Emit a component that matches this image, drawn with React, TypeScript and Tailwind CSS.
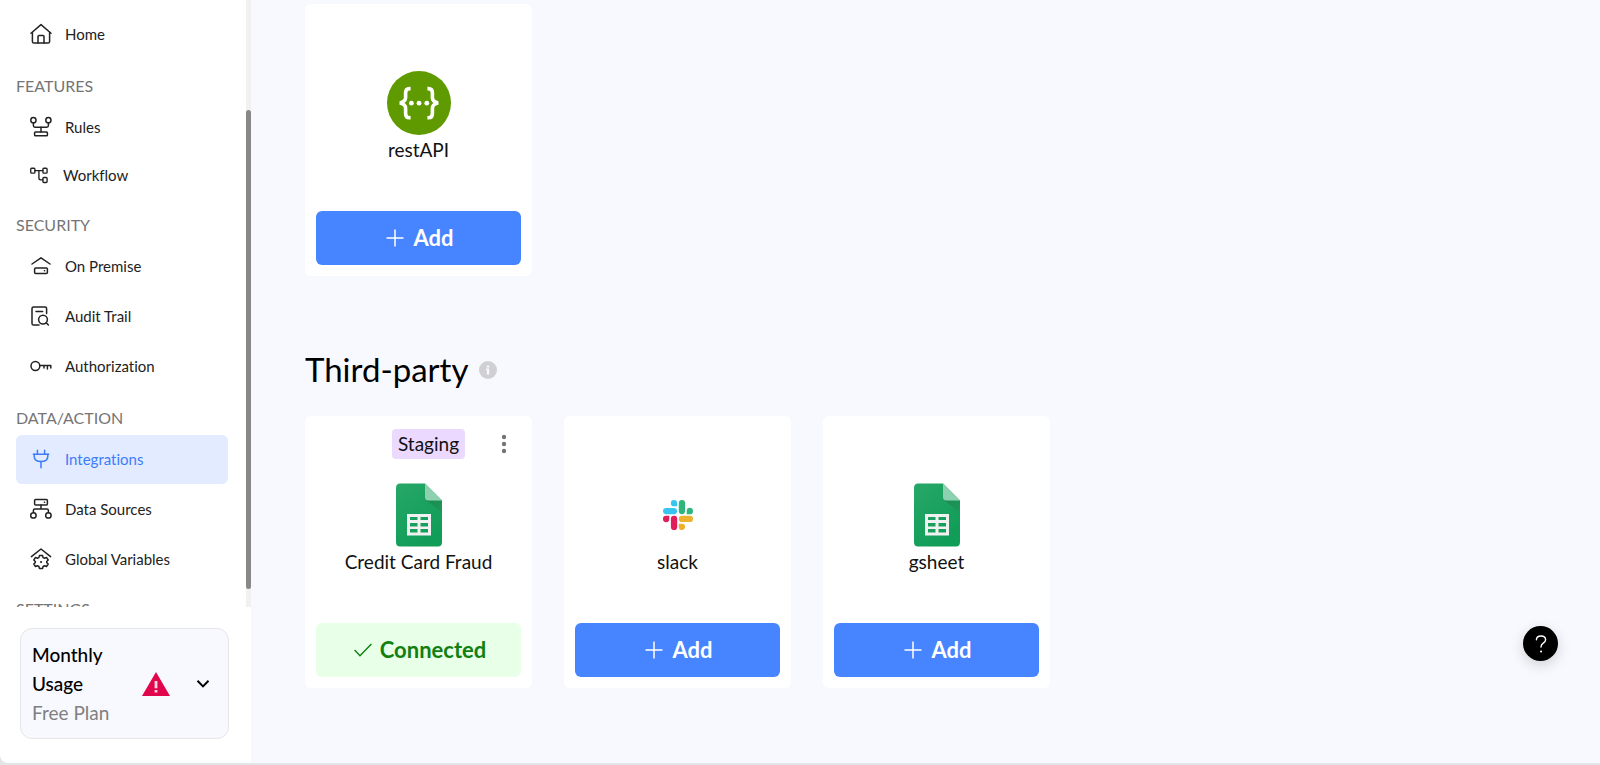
import React from 'react';
import { clsx } from 'clsx';

type IconProps = { className?: string };

function StrokeIcon({ children, className }: { children: React.ReactNode; className?: string }) {
  return (
    <svg
      viewBox="0 0 22 22"
      fill="none"
      stroke="currentColor"
      strokeWidth="1.5"
      strokeLinecap="round"
      strokeLinejoin="round"
      aria-hidden="true"
      className={clsx('h-[22px] shrink-0', className || 'w-[22px]')}
    >
      {children}
    </svg>
  );
}

const HomeIcon = () => (
  <StrokeIcon>
    <path d="M1 10.2 L11 1.6 L21 10.2" />
    <path d="M2.4 9.4 V18.4 Q2.4 20 4 20 H18 Q19.6 20 19.6 18.4 V9.4" />
    <path d="M8 20 V13.6 Q8 12.6 9 12.6 H13 Q14 12.6 14 13.6 V20" />
  </StrokeIcon>
);

const RulesIcon = () => (
  <StrokeIcon>
    <circle cx="3.4" cy="4.2" r="2.6" />
    <circle cx="18.4" cy="4.2" r="2.6" />
    <path d="M3.4 7 V9.6 Q3.4 11.2 5 11.2 H16.8 Q18.4 11.2 18.4 9.6 V7" />
    <path d="M11 11.2 V16" />
    <rect x="4.6" y="16" width="12.8" height="3.8" rx="0.8" />
  </StrokeIcon>
);

const WorkflowIcon = () => (
  <StrokeIcon className="w-5">
    <rect x="0.8" y="3.6" width="4.6" height="5.4" rx="1" />
    <rect x="14.2" y="3.6" width="4.6" height="5.4" rx="1" />
    <rect x="14.2" y="13.8" width="4.6" height="5.4" rx="1" />
    <path d="M5.4 6.2 H14.2 M9.8 6.2 V14.4 Q9.8 16.4 11.8 16.4 H14.2" />
  </StrokeIcon>
);

const PremiseIcon = () => (
  <StrokeIcon>
    <path d="M2 9 L11 2.8 L20 9" />
    <rect x="4.6" y="13" width="12.8" height="5.6" rx="1" />
    <path d="M14.4 15.8 h0.2" />
  </StrokeIcon>
);

const AuditIcon = () => (
  <StrokeIcon>
    <path d="M9 20 H3.6 Q2 20 2 18.4 V3.6 Q2 2 3.6 2 H15 Q16.6 2 16.6 3.6 V8.6" />
    <path d="M6 6.4 H12.6" />
    <circle cx="13" cy="14.6" r="4.4" />
    <path d="M16.2 17.8 L18.4 20" />
  </StrokeIcon>
);

const KeyIcon = () => (
  <StrokeIcon>
    <circle cx="5.4" cy="11" r="4.4" />
    <path d="M9.8 10.6 H20.8 V13 M17.4 10.8 V14 M14 10.8 V13" />
  </StrokeIcon>
);

const PlugIcon = () => (
  <StrokeIcon>
    <path d="M3.4 6.2 H18.6" />
    <path d="M4.2 6.2 V8.2 Q4.2 13.6 11 13.6 Q17.8 13.6 17.8 8.2 V6.2" />
    <path d="M7.4 6.2 V2.2 M14.6 6.2 V2.2 M11 13.6 V19.8" />
  </StrokeIcon>
);

const SourcesIcon = () => (
  <StrokeIcon>
    <rect x="4.6" y="1.6" width="12.8" height="5.4" rx="1" />
    <path d="M14.4 4.2 h0.2" />
    <path d="M11 7 V11 M3.4 14.6 V12.4 Q3.4 11 4.8 11 H17 Q18.4 11 18.4 12.4 V14.6" />
    <circle cx="3.4" cy="17.4" r="2.7" />
    <circle cx="18.4" cy="17.4" r="2.7" />
  </StrokeIcon>
);

const VariablesIcon = () => (
  <StrokeIcon>
    <path d="M1.4 8.6 L11 1 L20.6 8.6" />
    <path d="M9.4 7.6 h3.2 l.5 2 1.5.7 1.9-.9 1.7 2.6-1.5 1.5v1l1.5 1.5-1.7 2.5-1.9-.8-1.5.8-.5 1.9h-3.2l-.5-1.9-1.5-.8-1.9.8-1.7-2.5 1.5-1.5v-1l-1.5-1.5 1.7-2.6 1.9.9 1.5-.7z" />
    <path d="M11 14 h0.1" strokeWidth="2" />
  </StrokeIcon>
);

function RestApiLogo() {
  return (
    <svg viewBox="0 0 64 64" className="w-16 h-16" aria-hidden="true">
      <circle cx="32" cy="32" r="32" fill="#5f9b00" />
      <g fill="none" stroke="#fff" strokeWidth="3.6">
        <path d="M23.6 17.6 H22.6 Q18.6 17.6 18.6 21.8 V26.6 Q18.6 31 12.8 32 Q18.6 33 18.6 37.4 V42.4 Q18.6 46.8 22.6 46.8 H23.6" />
        <path d="M40.4 17.6 H41.4 Q45.4 17.6 45.4 21.8 V26.6 Q45.4 31 51.2 32 Q45.4 33 45.4 37.4 V42.4 Q45.4 46.8 41.4 46.8 H40.4" />
      </g>
      <g fill="#fff">
        <circle cx="24.4" cy="32.2" r="2.4" />
        <circle cx="32" cy="32.2" r="2.4" />
        <circle cx="39.8" cy="32.2" r="2.4" />
      </g>
    </svg>
  );
}

function SheetsLogo() {
  return (
    <svg viewBox="0 0 46 64" className="w-[46px] h-16" aria-hidden="true">
      <defs>
        <linearGradient id="sheet" x1="0" y1="0" x2="0.6" y2="1">
          <stop offset="0" stopColor="#27a768" />
          <stop offset="1" stopColor="#109d58" />
        </linearGradient>
        <linearGradient id="fold" x1="0" y1="0" x2="1" y2="1">
          <stop offset="0" stopColor="#1c8a50" />
          <stop offset="1" stopColor="#1c9a5a" />
        </linearGradient>
      </defs>
      <path d="M4 0.5 H29 L46 17.5 V59 Q46 63.5 42 63.5 H4 Q0 63.5 0 59 V5 Q0 0.5 4 0.5 Z" fill="url(#sheet)" />
      <path d="M30 17 L46 30 V17.5 Z" fill="url(#fold)" />
      <path d="M29 0.5 L46 17.5 H32.5 Q29 17.5 29 14 Z" fill="#8ed1b1" />
      <path
        fillRule="evenodd"
        fill="#f1f1f1"
        d="M11 31 H35 V52.5 H11 Z M14 34 V37 H21.5 V34 Z M24.5 34 V37 H32 V34 Z M14 40 V43.5 H21.5 V40 Z M24.5 40 V43.5 H32 V40 Z M14 46 V49.5 H21.5 V46 Z M24.5 46 V49.5 H32 V46 Z"
      />
    </svg>
  );
}

function SlackLogo() {
  return (
    <svg viewBox="0 0 30 30" className="w-[30px] h-[30px] my-[17px]" aria-hidden="true">
      <g fill="#36c5f0">
        <path d="M11 0 a3.1 3.1 0 1 0 0 6.3 h3.1 V3.1 A3.1 3.1 0 0 0 11 0 Z" />
        <rect x="0" y="7.9" width="14.1" height="6.3" rx="3.1" />
      </g>
      <g fill="#2eb67d">
        <rect x="15.8" y="0" width="6.3" height="14.2" rx="3.1" />
        <path d="M30 11 a3.1 3.1 0 1 0 -6.3 0 v3.2 h3.2 A3.1 3.1 0 0 0 30 11 Z" />
      </g>
      <g fill="#ecb22e">
        <rect x="15.8" y="15.8" width="14.2" height="6.3" rx="3.1" />
        <path d="M18.9 30 a3.1 3.1 0 1 0 0 -6.3 h-3.1 v3.2 A3.1 3.1 0 0 0 18.9 30 Z" />
      </g>
      <g fill="#e01e5a">
        <path d="M0 19 a3.1 3.1 0 1 0 6.3 0 v-3.2 H3.1 A3.1 3.1 0 0 0 0 19 Z" />
        <rect x="7.9" y="15.8" width="6.3" height="14.2" rx="3.1" />
      </g>
    </svg>
  );
}

interface NavItem {
  label: string;
  icon: React.ComponentType<IconProps>;
  active?: boolean;
  compact?: boolean;
}

interface NavSection {
  title: string;
  items: NavItem[];
}

const sections: NavSection[] = [
  {
    title: 'Features',
    items: [
      { label: 'Rules', icon: RulesIcon },
      { label: 'Workflow', icon: WorkflowIcon, compact: true },
    ],
  },
  {
    title: 'Security',
    items: [
      { label: 'On Premise', icon: PremiseIcon },
      { label: 'Audit Trail', icon: AuditIcon },
      { label: 'Authorization', icon: KeyIcon },
    ],
  },
  {
    title: 'Data/Action',
    items: [
      { label: 'Integrations', icon: PlugIcon, active: true },
      { label: 'Data Sources', icon: SourcesIcon },
      { label: 'Global Variables', icon: VariablesIcon },
    ],
  },
  { title: 'Settings', items: [] },
];

function NavLink({ item }: { item: NavItem }) {
  const Icon = item.icon;
  return (
    <a
      href="#"
      aria-current={item.active ? 'page' : undefined}
      className={clsx(
        'flex items-center gap-[13px] px-[14px] pb-px rounded-md text-[15px]',
        item.compact ? 'h-[45px]' : 'h-[49px]',
        item.active ? 'bg-[#e2ebff] text-[#3e7bfa]' : 'text-[#222]'
      )}
    >
      <Icon />
      {item.label}
    </a>
  );
}

function Sidebar() {
  return (
    <aside className="w-[251px] shrink-0 flex flex-col bg-white rounded-bl-lg">
      <div className="flex h-[607px] overflow-hidden">
        <nav className="flex-1 pl-4 pr-[18px] pt-[10px]">
          <NavLink item={{ label: 'Home', icon: HomeIcon }} />
          {sections.map(section => (
            <section key={section.title} className="mt-3 last:mt-[10px]">
              <h2 className="h-8 leading-[30px] text-base text-[#757575] uppercase">{section.title}</h2>
              <div className="flex flex-col gap-px">
                {section.items.map(item => (
                  <NavLink key={item.label} item={item} />
                ))}
              </div>
            </section>
          ))}
        </nav>
        <div className="w-[5px] bg-[#f1f1f1] pt-[110px]">
          <div className="h-[479px] bg-[#888] rounded-full" />
        </div>
      </div>

      <button className="mx-5 mt-[21px] w-[209px] px-[11px] py-[11px] flex items-center text-left text-[19px] leading-[29px] bg-[#f8f9ff] border border-[#e6e6e9] rounded-xl">
        <span className="w-[109px]">
          <span className="block pr-6 font-medium text-black">Monthly Usage</span>
          <span className="block text-[#808080]">Free Plan</span>
        </span>
        <svg viewBox="0 0 30 26" className="w-[30px] h-[26px]" aria-hidden="true">
          <path d="M15 1 L29 25 H1 Z" fill="#e1064b" />
          <path d="M13.6 10 H16.4 V17.2 H13.6 Z M13.6 19 H16.4 V21.4 H13.6 Z" fill="#fbd5e0" />
        </svg>
        <svg viewBox="0 0 14 10" fill="none" stroke="#000" strokeWidth="2" className="w-[14px] h-[10px] ml-[25px]" aria-hidden="true">
          <path d="M1.5 1.8 L7 7.4 L12.5 1.8" />
        </svg>
      </button>
    </aside>
  );
}

interface Integration {
  name: string;
  logo: React.ComponentType;
  connected?: boolean;
  badge?: string;
}

function IntegrationCard({ item }: { item: Integration }) {
  const Logo = item.logo;
  return (
    <article className="w-[227px] h-[272px] p-[11px] flex flex-col bg-white rounded-md">
      <div className="h-[56px] flex items-start">
        {item.badge && (
          <div className="flex-1 grid grid-cols-[1fr_auto_1fr] items-center pt-[2px] pl-5">
            <span className="col-start-2 h-[30px] px-[6px] leading-[30px] text-[19px] text-[#111] bg-[#ecd9ff] rounded">
              {item.badge}
            </span>
            <button aria-label="More options" className="justify-self-end mr-[10px] p-1">
              <svg viewBox="0 0 6 20" fill="#757575" className="w-[6px] h-5">
                <circle cx="3" cy="3" r="2.2" />
                <circle cx="3" cy="10" r="2.2" />
                <circle cx="3" cy="17" r="2.2" />
              </svg>
            </button>
          </div>
        )}
      </div>
      <div className="flex-1 flex flex-col items-center">
        <Logo />
        <h3 className="text-[19px] leading-[30px] text-[#111]">{item.name}</h3>
      </div>
      {item.connected ? (
        <button className="h-[54px] pb-px pl-[3px] flex items-center justify-center gap-2 rounded-md bg-[#e8ffe8] text-[#118011] text-[22px] font-bold">
          <svg viewBox="0 0 18 14" fill="none" stroke="currentColor" strokeWidth="1.4" className="w-[18px] h-[14px]" aria-hidden="true">
            <path d="M0.6 7 L6 12.8 L17.4 1" />
          </svg>
          Connected
        </button>
      ) : (
        <button className="h-[54px] pb-px pl-[3px] flex items-center justify-center gap-[9px] rounded-md bg-[#4784ff] text-white text-[22px] font-bold">
          <svg viewBox="0 0 18 18" stroke="currentColor" strokeWidth="1.5" className="w-[18px] h-[18px]" aria-hidden="true">
            <path d="M9 0.5 V17.5 M0.5 9 H17.5" />
          </svg>
          Add
        </button>
      )}
    </article>
  );
}

const thirdParty: Integration[] = [
  { name: 'Credit Card Fraud', logo: SheetsLogo, connected: true, badge: 'Staging' },
  { name: 'slack', logo: SlackLogo },
  { name: 'gsheet', logo: SheetsLogo },
];

export default function App() {
  return (
    <div className="min-h-screen flex flex-col bg-[#e3e4e8] pb-[2px] font-['Lato',sans-serif] [font-variant-ligatures:none]">
      <div className="flex-1 flex">
        <Sidebar />
        <main className="flex-1 bg-[#f8f9ff] pl-[54px] pt-1">
          <IntegrationCard item={{ name: 'restAPI', logo: RestApiLogo }} />

          <div className="mt-[70px] flex items-center gap-[11px]">
            <h1 className="pb-[2px] text-[33px] leading-[46px] text-black">Third-party</h1>
            <svg viewBox="0 0 18 18" className="w-[18px] h-[18px]" role="img" aria-label="Info">
              <circle cx="9" cy="9" r="9" fill="#cfcfd4" />
              <path d="M7.8 4.4 H10.2 V6.4 H7.8 Z M7 7.6 H10.2 V13.4 H7.8 V9 H7 Z" fill="#f8f9ff" />
            </svg>
          </div>

          <div className="mt-[22px] flex flex-wrap gap-8">
            {thirdParty.map(item => (
              <IntegrationCard key={item.name} item={item} />
            ))}
          </div>
        </main>
      </div>

      <button
        aria-label="Help"
        className="fixed right-[42px] bottom-[104px] w-[35px] h-[35px] flex items-center justify-center rounded-full bg-black text-white shadow-[0_4px_14px_rgba(0,0,0,0.16)]"
      >
        <svg viewBox="0 0 12 18" fill="none" stroke="currentColor" strokeWidth="1.4" strokeLinecap="round" className="w-3 h-[18px]">
          <path d="M1.4 4.8 Q1.6 1 6 1 Q10.6 1 10.6 4.8 Q10.6 6.8 8.2 8.2 Q6 9.6 6 12" />
          <path d="M6 16.4 h0.1" strokeWidth="2" />
        </svg>
      </button>
    </div>
  );
}
